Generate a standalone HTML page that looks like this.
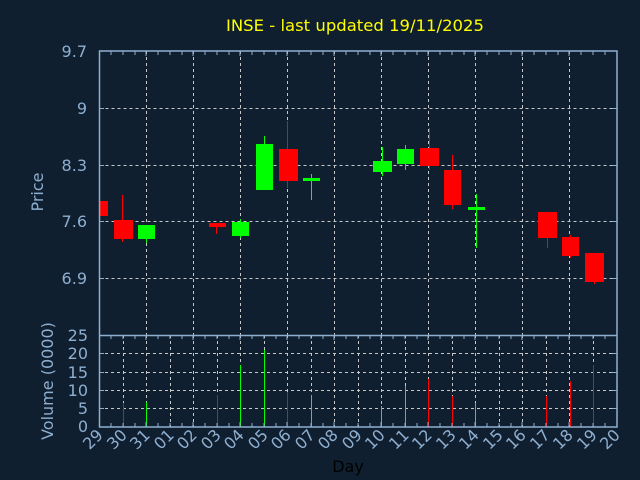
<!DOCTYPE html>
<html><head><style>html,body{margin:0;padding:0;background:#0f1f2f;}svg{display:block}</style></head><body>
<svg width="640" height="480" xmlns="http://www.w3.org/2000/svg" font-family="DejaVu Sans, Liberation Sans, sans-serif">
<rect width="640" height="480" fill="#0f1f2f"/>
<text x="226" y="31" fill="#ffff00" font-size="16" textLength="258" lengthAdjust="spacingAndGlyphs">INSE - last updated 19/11/2025</text>
<g stroke="#c8c8c8" stroke-width="1" stroke-dasharray="3,3" fill="none">
<path d="M99.5 108.5H616M99.5 165.5H616M99.5 221.5H616M99.5 278.5H616"/>
<path d="M146.5 51V335M193.5 51V335M240.5 51V335M287.5 51V335M334.5 51V335M381.5 51V335M428.5 51V335M475.5 51V335M522.5 51V335M569.5 51V335"/>
<path d="M99 408.5H616M99 390.5H616M99 372.5H616M99 353.5H616"/>
<path d="M123.5 335V427M146.5 335V427M170.5 335V427M193.5 335V427M217.5 335V427M240.5 335V427M264.5 335V427M287.5 335V427M311.5 335V427M334.5 335V427M358.5 335V427M381.5 335V427M405.5 335V427M428.5 335V427M452.5 335V427M475.5 335V427M499.5 335V427M522.5 335V427M546.5 335V427M569.5 335V427M593.5 335V427"/>
</g>
<g fill="#ff0000">
<rect x="99" y="201" width="9" height="15"/>
<rect x="122" y="195" width="1" height="47"/><rect x="114" y="220" width="19" height="19"/>
<rect x="216" y="223" width="1" height="11"/><rect x="209" y="223" width="17" height="4"/>
<rect x="287" y="121" width="1" height="67"/><rect x="279" y="149" width="19" height="32"/>
<rect x="429" y="128" width="1" height="42"/><rect x="420" y="148" width="19" height="18"/>
<rect x="452" y="155" width="1" height="54"/><rect x="444" y="170" width="17" height="35"/>
<rect x="547" y="212" width="1" height="36"/><rect x="538" y="212" width="19" height="26"/>
<rect x="570" y="235" width="1" height="23"/><rect x="562" y="237" width="17" height="19"/>
<rect x="594" y="253" width="1" height="31"/><rect x="585" y="253" width="19" height="29"/>
</g>
<g fill="#00ff00">
<rect x="146" y="225" width="1" height="18"/><rect x="138" y="225" width="17" height="14"/>
<rect x="240" y="219" width="1" height="19"/><rect x="232" y="222" width="17" height="14"/>
<rect x="264" y="136" width="1" height="54"/><rect x="256" y="144" width="17" height="46"/>
<rect x="311" y="174" width="1" height="26"/><rect x="303" y="178" width="17" height="3"/>
<rect x="382" y="147" width="1" height="29"/><rect x="373" y="161" width="19" height="11"/>
<rect x="405" y="145" width="1" height="25"/><rect x="397" y="149" width="17" height="15"/>
<rect x="476" y="194" width="1" height="54"/><rect x="468" y="207" width="17" height="3"/>
</g>
<g stroke-width="1">
<path d="M123.5 403V427M287.5 392V427M217.5 395V427M428.5 379V427M452.5 396V427M546.5 396V427M570.5 381V427M593.5 365V427" stroke="#ff0000"/>
<path d="M146.5 402V427M240.5 365V427M264.5 350V427M311.5 395V427M381.5 406V427M405.5 386V427M475.5 403V427" stroke="#00ff00"/>
</g>
<g stroke="#8fafd0" fill="none" stroke-width="1.5">
<path d="M99.5 51V427H617V51H99.5Z"/><path d="M99.5 335.5H617"/>
</g>
<g stroke="#8fafd0" stroke-width="1">
<path d="M111 51v4M123 51v4M135 51v4M146 51v5M158 51v4M170 51v4M182 51v4M193 51v5M205 51v4M217 51v4M229 51v4M240 51v5M252 51v4M264 51v4M276 51v4M287 51v5M299 51v4M311 51v4M323 51v4M334 51v5M346 51v4M358 51v4M370 51v4M381 51v5M393 51v4M405 51v4M417 51v4M428 51v5M440 51v4M452 51v4M464 51v4M475 51v5M487 51v4M499 51v4M511 51v4M522 51v5M534 51v4M546 51v4M558 51v4M569 51v5M581 51v4M593 51v4M605 51v4"/>
<path d="M111 335v4M123 335v4M135 335v4M146 335v5M158 335v4M170 335v4M182 335v4M193 335v5M205 335v4M217 335v4M229 335v4M240 335v5M252 335v4M264 335v4M276 335v4M287 335v5M299 335v4M311 335v4M323 335v4M334 335v5M346 335v4M358 335v4M370 335v4M381 335v5M393 335v4M405 335v4M417 335v4M428 335v5M440 335v4M452 335v4M464 335v4M475 335v5M487 335v4M499 335v4M511 335v4M522 335v5M534 335v4M546 335v4M558 335v4M569 335v5M581 335v4M593 335v4M605 335v4"/>
<path d="M111 427v-4M123 427v-4M135 427v-4M146 427v-5M158 427v-4M170 427v-4M182 427v-4M193 427v-5M205 427v-4M217 427v-4M229 427v-4M240 427v-5M252 427v-4M264 427v-4M276 427v-4M287 427v-5M299 427v-4M311 427v-4M323 427v-4M334 427v-5M346 427v-4M358 427v-4M370 427v-4M381 427v-5M393 427v-4M405 427v-4M417 427v-4M428 427v-5M440 427v-4M452 427v-4M464 427v-4M475 427v-5M487 427v-4M499 427v-4M511 427v-4M522 427v-5M534 427v-4M546 427v-4M558 427v-4M569 427v-5M581 427v-4M593 427v-4M605 427v-4"/>
<path d="M99 108.5h5M99 165.5h5M99 221.5h5M99 278.5h5M612 108.5h5M612 165.5h5M612 221.5h5M612 278.5h5M99 408.5h5M99 390.5h5M99 372.5h5M99 353.5h5M612 408.5h5M612 390.5h5M612 372.5h5M612 353.5h5"/>
</g>
<g fill="#8fafd0" font-size="16" text-anchor="end">
<text x="87" y="57">9.7</text><text x="87" y="114">9</text><text x="87" y="171">8.3</text><text x="87" y="227">7.6</text><text x="87" y="284">6.9</text>
<text x="88" y="341">25</text><text x="88" y="359">20</text><text x="88" y="378">15</text><text x="88" y="396">10</text><text x="88" y="414">5</text><text x="88" y="432">0</text>
</g>
<text transform="translate(43,192) rotate(-90)" fill="#8fafd0" font-size="16" text-anchor="middle">Price</text>
<text transform="translate(53,381) rotate(-90)" fill="#8fafd0" font-size="16" text-anchor="middle">Volume (0000)</text>
<g fill="#8fafd0" font-size="16" text-anchor="end">
<text transform="translate(104,436) rotate(-45)">29</text>
<text transform="translate(128,436) rotate(-45)">30</text>
<text transform="translate(151,436) rotate(-45)">31</text>
<text transform="translate(175,436) rotate(-45)">01</text>
<text transform="translate(198,436) rotate(-45)">02</text>
<text transform="translate(222,436) rotate(-45)">03</text>
<text transform="translate(245,436) rotate(-45)">04</text>
<text transform="translate(269,436) rotate(-45)">05</text>
<text transform="translate(292,436) rotate(-45)">06</text>
<text transform="translate(316,436) rotate(-45)">07</text>
<text transform="translate(339,436) rotate(-45)">08</text>
<text transform="translate(363,436) rotate(-45)">09</text>
<text transform="translate(386,436) rotate(-45)">10</text>
<text transform="translate(410,436) rotate(-45)">11</text>
<text transform="translate(433,436) rotate(-45)">12</text>
<text transform="translate(457,436) rotate(-45)">13</text>
<text transform="translate(480,436) rotate(-45)">14</text>
<text transform="translate(504,436) rotate(-45)">15</text>
<text transform="translate(527,436) rotate(-45)">16</text>
<text transform="translate(551,436) rotate(-45)">17</text>
<text transform="translate(574,436) rotate(-45)">18</text>
<text transform="translate(598,436) rotate(-45)">19</text>
<text transform="translate(621,436) rotate(-45)">20</text>
</g>
<text x="348" y="472" fill="#000000" font-size="16" text-anchor="middle">Day</text>
</svg>
</body></html>
